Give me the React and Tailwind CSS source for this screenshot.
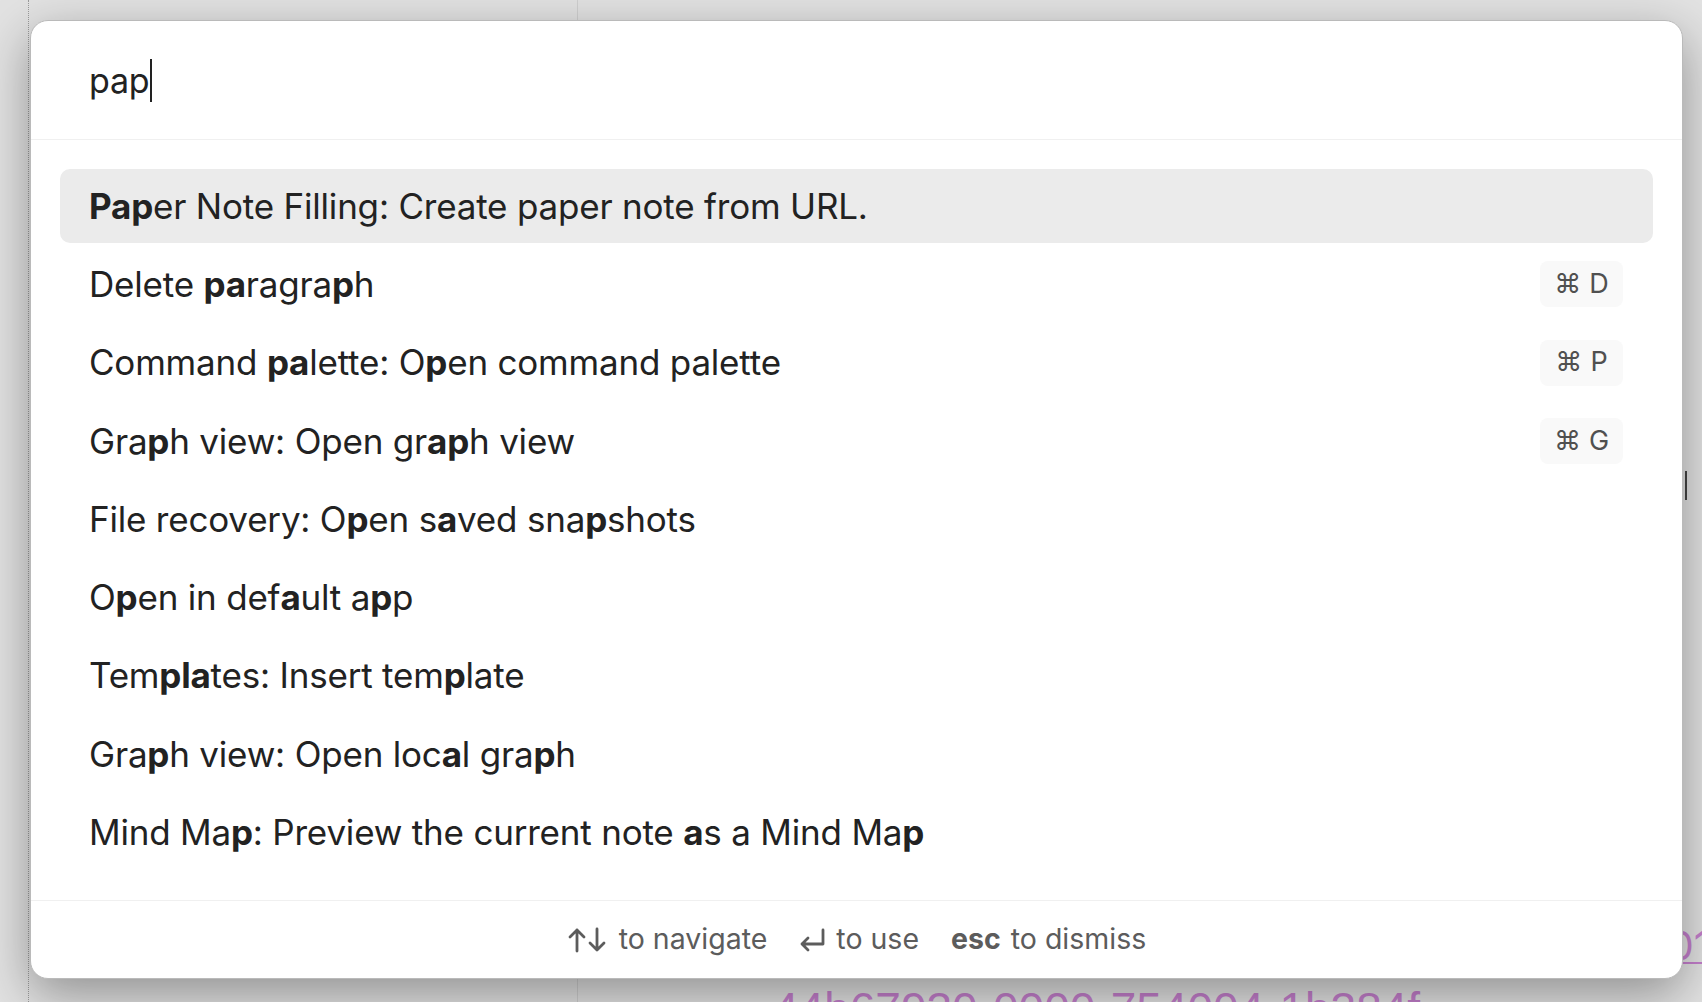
import React from "react";

const items = [
  { parts: [["Pap", 1], ["er Note Filling: Create paper note from URL.", 0]], active: true },
  { parts: [["Delete ", 0], ["pa", 1], ["ragra", 0], ["p", 1], ["h", 0]], key: "D" },
  { parts: [["Command ", 0], ["pa", 1], ["lette: O", 0], ["p", 1], ["en command palette", 0]], key: "P" },
  { parts: [["Gra", 0], ["p", 1], ["h view: Open gr", 0], ["ap", 1], ["h view", 0]], key: "G" },
  { parts: [["File recovery: O", 0], ["p", 1], ["en s", 0], ["a", 1], ["ved sna", 0], ["p", 1], ["shots", 0]] },
  { parts: [["O", 0], ["p", 1], ["en in def", 0], ["a", 1], ["ult a", 0], ["p", 1], ["p", 0]] },
  { parts: [["Tem", 0], ["pla", 1], ["tes: Insert tem", 0], ["p", 1], ["late", 0]] },
  { parts: [["Gra", 0], ["p", 1], ["h view: Open loc", 0], ["a", 1], ["l gra", 0], ["p", 1], ["h", 0]] },
  { parts: [["Mind Ma", 0], ["p", 1], [": Preview the current note ", 0], ["a", 1], ["s a Mind Ma", 0], ["p", 1]] },
];

const ArrowUp = () => (
  <svg width="20" height="26" viewBox="0 0 20 26" fill="none" stroke="#5c5c5c" strokeWidth="2.8" strokeLinecap="round" strokeLinejoin="round">
    <path d="M10 24V3M3 10l7-7 7 7" />
  </svg>
);

const ArrowDown = () => (
  <svg width="20" height="26" viewBox="0 0 20 26" fill="none" stroke="#5c5c5c" strokeWidth="2.8" strokeLinecap="round" strokeLinejoin="round">
    <path d="M10 2v21M3 16l7 7 7-7" />
  </svg>
);

const EnterIcon = () => (
  <svg width="27" height="24" viewBox="0 0 27 24" fill="none" stroke="#5c5c5c" strokeWidth="2.8" strokeLinecap="round" strokeLinejoin="round">
    <path d="M24 2v14H3M9 10l-6 6 6 6" />
  </svg>
);

export default function App() {
  return (
    <div
      className="relative w-[1702px] h-[1002px] overflow-hidden bg-[#e2e2e2]"
      style={{ fontFamily: "Inter, 'DejaVu Sans', sans-serif" }}
    >
      {/* background workspace */}
      <div className="flex h-full">
        <div className="w-[578px] h-full border-r border-[#cfcfcf] flex">
          <div className="w-[29px] h-full border-r border-dotted border-[#9a9a9a]" />
        </div>
        <div className="flex-1 flex flex-col items-end">
          <div className="mt-[471px] w-[2px] h-[29px] bg-[#444] mr-[15px] shrink-0" />
          <div className="mt-[422px] -mr-[8px] shrink-0 text-[40px] leading-[48px] text-[#c47fcc] underline decoration-2 underline-offset-2 whitespace-nowrap">
            -01
          </div>
          <div
            className="self-start ml-[195px] mt-[13px] shrink-0 text-[46px] leading-[52px] text-[#c47fcc] whitespace-nowrap"
            style={{ fontFamily: "'Liberation Sans', Arial, sans-serif" }}
          >
            44b67930-0000-754004-1b384f
          </div>
        </div>
      </div>

      {/* command palette */}
      <div className="absolute left-[30px] top-[20px] w-[1653px] h-[959px] flex flex-col rounded-[18px] bg-white border border-[#bababa] shadow-[0_16px_50px_rgba(0,0,0,0.36)] overflow-hidden">
        <div className="h-[119px] shrink-0 flex items-center pl-[58px] border-b border-[#f0f0f0]">
          <span className="text-[34px] text-[#222] tracking-[-0.2px]">pap</span>
          <span className="w-[2px] h-[43px] bg-[#222] ml-[1px]" />
        </div>

        <div className="flex-1 flex flex-col gap-[4.25px] px-[29px] pt-[29px]">
          {items.map((it, i) => (
            <div
              key={i}
              className={
                "h-[74px] shrink-0 flex items-center justify-between pl-[29px] pr-[30px] rounded-[10px] " +
                (it.active ? "bg-[#ebebeb]" : "")
              }
            >
              <span className="text-[35px] text-[#222] tracking-[-0.2px] whitespace-nowrap">
                {it.parts.map(([t, b], j) =>
                  b ? (
                    <span key={j} className="font-bold">
                      {t}
                    </span>
                  ) : (
                    <span key={j}>{t}</span>
                  )
                )}
              </span>
              {it.key && (
                <span className="h-[46px] w-[83px] flex items-center justify-center gap-[8px] rounded-[8px] bg-[#f9f9f9] text-[27px] text-[#505050]">
                  <span>⌘</span>
                  <span>{it.key}</span>
                </span>
              )}
            </div>
          ))}
        </div>

        <div className="h-[78px] shrink-0 border-t border-[#f0f0f0] flex items-center justify-center gap-[32px] text-[28.5px] text-[#5c5c5c]">
          <div className="flex items-center gap-[12px]">
            <span className="flex items-center">
              <ArrowUp />
              <ArrowDown />
            </span>
            <span>to navigate</span>
          </div>
          <div className="flex items-center gap-[10px]">
            <EnterIcon />
            <span>to use</span>
          </div>
          <div className="flex items-center gap-[10px]">
            <span className="font-bold">esc</span>
            <span>to dismiss</span>
          </div>
        </div>
      </div>
    </div>
  );
}
